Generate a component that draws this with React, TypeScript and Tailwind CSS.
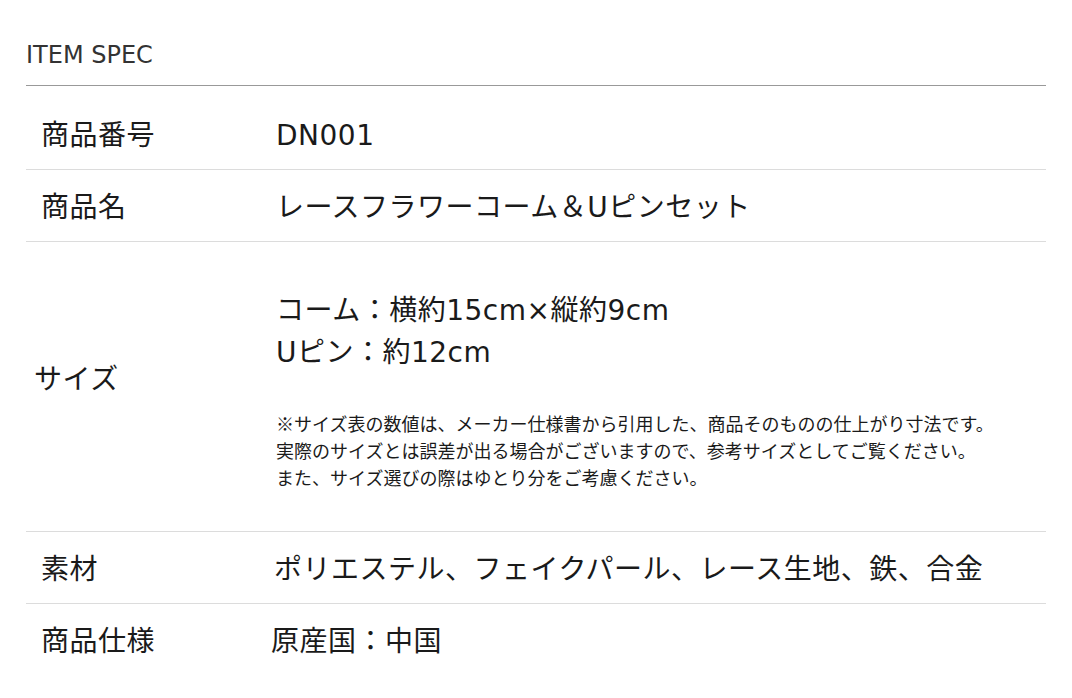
import React from "react";

const mixed = {
  fontFamily: '"DejaVu Sans", "Noto Sans CJK JP", sans-serif',
};
const cjk = {
  fontFamily: '"Noto Sans CJK JP", "Noto Sans", sans-serif',
};

function Row({
  label,
  children,
  last,
}: {
  label: string;
  children: React.ReactNode;
  last?: boolean;
}) {
  return (
    <div
      className={
        "flex items-center pt-[16px] pb-[12px] text-[28px] leading-[43px] tracking-[0.5px] text-[#1a1a1a] " +
        (last ? "" : "border-b border-[#dcdcdc]")
      }
    >
      <div className="w-[250px] shrink-0 pl-[15px]">{label}</div>
      <div className="flex-1">{children}</div>
    </div>
  );
}

export default function App() {
  return (
    <div className="w-[1072px] h-[698px] overflow-hidden bg-white px-[26px] pt-[39px]" style={mixed}>
      <div className="w-[1020px]">
        <h2 className="border-b border-[#999999] pb-[14px] text-[24px] leading-[32px] font-normal text-[#333333]">
          ITEM SPEC
        </h2>
        <div className="mt-[12px]">
          <Row label="商品番号">DN001</Row>
          <Row label="商品名">レースフラワーコーム＆Uピンセット</Row>
          <div className="flex border-b border-[#dcdcdc] text-[#1a1a1a]">
            <div className="flex w-[250px] shrink-0 items-center pb-[14px] pl-[8px] text-[28px] leading-[42px] tracking-[0.5px]">
              サイズ
            </div>
            <div className="flex-1 pt-[48px] pb-[40px]">
              <div className="text-[28px] leading-[42px] tracking-[0.5px]">
                <p>コーム：横約15cm×縦約9cm</p>
                <p>Uピン：約12cm</p>
              </div>
              <div className="mt-[36px] text-[18px] leading-[27px]" style={cjk}>
                <p>※サイズ表の数値は、メーカー仕様書から引用した、商品そのものの仕上がり寸法です。</p>
                <p>実際のサイズとは誤差が出る場合がございますので、参考サイズとしてご覧ください。</p>
                <p>また、サイズ選びの際はゆとり分をご考慮ください。</p>
              </div>
            </div>
          </div>
          <Row label="素材">
            <span className="-ml-[2px] block">ポリエステル、フェイクパール、レース生地、鉄、合金</span>
          </Row>
          <Row label="商品仕様" last>
            <span className="-ml-[5px] block">原産国：中国</span>
          </Row>
        </div>
      </div>
    </div>
  );
}
